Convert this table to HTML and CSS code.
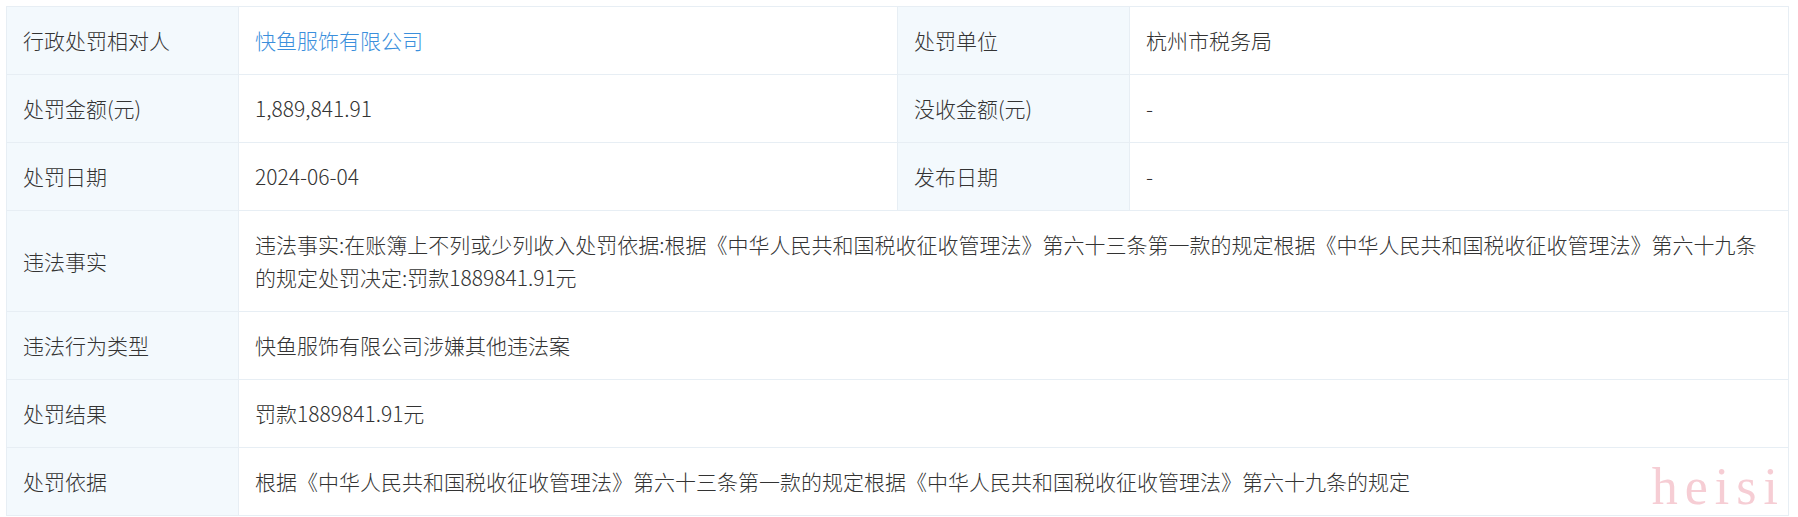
FILE: index.html
```html
<!DOCTYPE html>
<html lang="zh-CN">
<head>
  <meta charset="UTF-8" />
  <title>行政处罚详情</title>
  <link rel="stylesheet" href="styles.css">
</head>
<body>
  <!-- 行政处罚详情表 -->
  <div class="detail-wrap">
    <table class="detail-table">
      <colgroup>
        <col class="col-label">
        <col class="col-value">
        <col class="col-label">
        <col class="col-value">
      </colgroup>
      <tr>
        <td class="label">行政处罚相对人</td>
        <td><a class="link" href="#">快鱼服饰有限公司</a></td>
        <td class="label">处罚单位</td>
        <td>杭州市税务局</td>
      </tr>
      <tr>
        <td class="label">处罚金额(元)</td>
        <td>1,889,841.91</td>
        <td class="label">没收金额(元)</td>
        <td>-</td>
      </tr>
      <tr>
        <td class="label">处罚日期</td>
        <td>2024-06-04</td>
        <td class="label">发布日期</td>
        <td>-</td>
      </tr>
      <tr>
        <td class="label">违法事实</td>
        <td colspan="3">违法事实:在账簿上不列或少列收入处罚依据:根据《中华人民共和国税收征收管理法》第六十三条第一款的规定根据《中华人民共和国税收征收管理法》第六十九条的规定处罚决定:罚款1889841.91元</td>
      </tr>
      <tr>
        <td class="label">违法行为类型</td>
        <td colspan="3">快鱼服饰有限公司涉嫌其他违法案</td>
      </tr>
      <tr>
        <td class="label">处罚结果</td>
        <td colspan="3">罚款1889841.91元</td>
      </tr>
      <tr>
        <td class="label">处罚依据</td>
        <td colspan="3">根据《中华人民共和国税收征收管理法》第六十三条第一款的规定根据《中华人民共和国税收征收管理法》第六十九条的规定</td>
      </tr>
    </table>
    <!-- 右下角水印 -->
    <span class="watermark">heisi</span>
  </div>
</body>
</html>
```

FILE: styles.css
```css
/* 页面整体 */
body {
  margin: 0;
  padding: 6px 9px 0 6px;
  background: #ffffff;
  font-family: "Noto Sans CJK SC", "Noto Sans", sans-serif;
  font-weight: 300;
  color: #333333;
}

.detail-wrap {
  position: relative;
}

/* 详情表格 */
.detail-table {
  width: 100%;
  border-collapse: collapse;
  table-layout: fixed;
  font-size: 21px;
  line-height: 33px;
}

.col-label {
  width: 232px;
}

.detail-table td {
  border: 1px solid #e7eef4;
  padding: 17px 16px;
  vertical-align: middle;
  word-break: break-all;
}

.detail-table td.label {
  background-color: #f3f9fd;
}

.link {
  color: #3b8fdc;
  text-decoration: none;
}

/* 水印 */
.watermark {
  position: absolute;
  right: 4px;
  bottom: 3px;
  font-family: "Liberation Serif", serif;
  font-size: 52px;
  letter-spacing: 7px;
  line-height: 1;
  color: #f6cdd4;
  pointer-events: none;
}
```
